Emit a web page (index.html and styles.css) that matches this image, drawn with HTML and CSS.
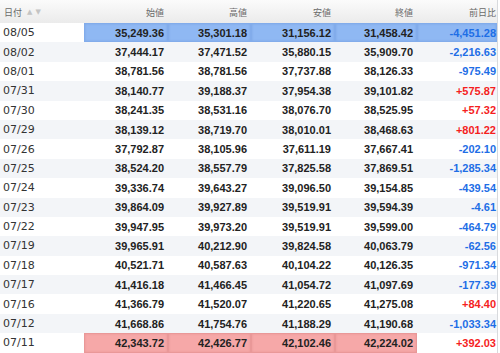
FILE: index.html
```html
<!DOCTYPE html>
<html lang="ja">
<head>
<meta charset="utf-8">
<link rel="stylesheet" href="styles.css">
</head>
<body>
<div class="table">
  <div class="row head">
    <div class="cell date-h">日付<span class="sort"><span class="up">▲</span><span class="dn">▼</span></span></div>
    <div class="cell">始値</div>
    <div class="cell">高値</div>
    <div class="cell">安値</div>
    <div class="cell">終値</div>
    <div class="cell">前日比</div>
  </div>
  <div class="row"><div class="cell d">08/05</div><div class="cell n blue">35,249.36</div><div class="cell n blue">35,301.18</div><div class="cell n blue">31,156.12</div><div class="cell n blue">31,458.42</div><div class="cell c neg blue">-4,451.28</div></div>
  <div class="row"><div class="cell d">08/02</div><div class="cell n">37,444.17</div><div class="cell n">37,471.52</div><div class="cell n">35,880.15</div><div class="cell n">35,909.70</div><div class="cell c neg">-2,216.63</div></div>
  <div class="row"><div class="cell d">08/01</div><div class="cell n">38,781.56</div><div class="cell n">38,781.56</div><div class="cell n">37,737.88</div><div class="cell n">38,126.33</div><div class="cell c neg">-975.49</div></div>
  <div class="row"><div class="cell d">07/31</div><div class="cell n">38,140.77</div><div class="cell n">39,188.37</div><div class="cell n">37,954.38</div><div class="cell n">39,101.82</div><div class="cell c pos">+575.87</div></div>
  <div class="row"><div class="cell d">07/30</div><div class="cell n">38,241.35</div><div class="cell n">38,531.16</div><div class="cell n">38,076.70</div><div class="cell n">38,525.95</div><div class="cell c pos">+57.32</div></div>
  <div class="row"><div class="cell d">07/29</div><div class="cell n">38,139.12</div><div class="cell n">38,719.70</div><div class="cell n">38,010.01</div><div class="cell n">38,468.63</div><div class="cell c pos">+801.22</div></div>
  <div class="row"><div class="cell d">07/26</div><div class="cell n">37,792.87</div><div class="cell n">38,105.96</div><div class="cell n">37,611.19</div><div class="cell n">37,667.41</div><div class="cell c neg">-202.10</div></div>
  <div class="row"><div class="cell d">07/25</div><div class="cell n">38,524.20</div><div class="cell n">38,557.79</div><div class="cell n">37,825.58</div><div class="cell n">37,869.51</div><div class="cell c neg">-1,285.34</div></div>
  <div class="row"><div class="cell d">07/24</div><div class="cell n">39,336.74</div><div class="cell n">39,643.27</div><div class="cell n">39,096.50</div><div class="cell n">39,154.85</div><div class="cell c neg">-439.54</div></div>
  <div class="row"><div class="cell d">07/23</div><div class="cell n">39,864.09</div><div class="cell n">39,927.89</div><div class="cell n">39,519.91</div><div class="cell n">39,594.39</div><div class="cell c neg">-4.61</div></div>
  <div class="row"><div class="cell d">07/22</div><div class="cell n">39,947.95</div><div class="cell n">39,973.20</div><div class="cell n">39,519.91</div><div class="cell n">39,599.00</div><div class="cell c neg">-464.79</div></div>
  <div class="row"><div class="cell d">07/19</div><div class="cell n">39,965.91</div><div class="cell n">40,212.90</div><div class="cell n">39,824.58</div><div class="cell n">40,063.79</div><div class="cell c neg">-62.56</div></div>
  <div class="row"><div class="cell d">07/18</div><div class="cell n">40,521.71</div><div class="cell n">40,587.63</div><div class="cell n">40,104.22</div><div class="cell n">40,126.35</div><div class="cell c neg">-971.34</div></div>
  <div class="row"><div class="cell d">07/17</div><div class="cell n">41,416.18</div><div class="cell n">41,466.45</div><div class="cell n">41,054.72</div><div class="cell n">41,097.69</div><div class="cell c neg">-177.39</div></div>
  <div class="row"><div class="cell d">07/16</div><div class="cell n">41,366.79</div><div class="cell n">41,520.07</div><div class="cell n">41,220.65</div><div class="cell n">41,275.08</div><div class="cell c pos">+84.40</div></div>
  <div class="row"><div class="cell d">07/12</div><div class="cell n">41,668.86</div><div class="cell n">41,754.76</div><div class="cell n">41,188.29</div><div class="cell n">41,190.68</div><div class="cell c neg">-1,033.34</div></div>
  <div class="row"><div class="cell d">07/11</div><div class="cell n pink">42,343.72</div><div class="cell n pink">42,426.77</div><div class="cell n pink">42,102.46</div><div class="cell n pink">42,224.02</div><div class="cell c pos">+392.03</div></div>
</div>
</body>
</html>
```
FILE: styles.css
```css
html, body {
  margin: 0;
  padding: 0;
  background: #ffffff;
}
.table {
  width: 497px;
  border-right: 1px solid #d8dadd;
  font-family: "Liberation Sans", Arial, sans-serif;
}
.row {
  display: grid;
  grid-template-columns: 84px 84px 83px 84px 82px 80px;
  height: 19.4px;
  align-items: stretch;
}
.row:nth-child(odd) {
  background: #f3f5f8;
}
.row.head {
  height: 23px;
  background: linear-gradient(#fbfbfb, #ebebeb);
}
.cell {
  display: flex;
  align-items: center;
  justify-content: flex-end;
  padding-right: 4px;
  white-space: nowrap;
}
.row .cell:last-child {
  padding-right: 1px;
}
.head .cell {
  font-family: "Noto Sans CJK JP", sans-serif;
  font-size: 9px;
  color: #6a6a6a;
  padding-top: 1px;
}
.head .date-h {
  justify-content: flex-start;
  padding-left: 4px;
}
.sort {
  display: inline-flex;
  gap: 3px;
  margin-left: 5px;
  font-size: 7px;
  color: #c4c4c4;
  font-family: "DejaVu Sans", sans-serif;
}
.cell.d {
  justify-content: flex-start;
  padding-left: 3px;
  font-family: "DejaVu Sans", Verdana, sans-serif;
  font-size: 11px;
  color: #333333;
}
.cell.n, .cell.c {
  font-size: 11px;
  font-weight: bold;
  color: #222222;
}
.cell.neg { color: #1e6ee6; }
.cell.pos { color: #f51e1e; }
.cell.blue {
  background: #8fb8f3;
  box-shadow: inset 0 0 0 1px #82aceb, inset 0 0 3px rgba(40, 80, 150, 0.35);
}
.cell.pink {
  background: #f6a8a8;
  box-shadow: inset 0 0 0 1px #e99898, inset 0 0 3px rgba(150, 40, 40, 0.3);
}
```
